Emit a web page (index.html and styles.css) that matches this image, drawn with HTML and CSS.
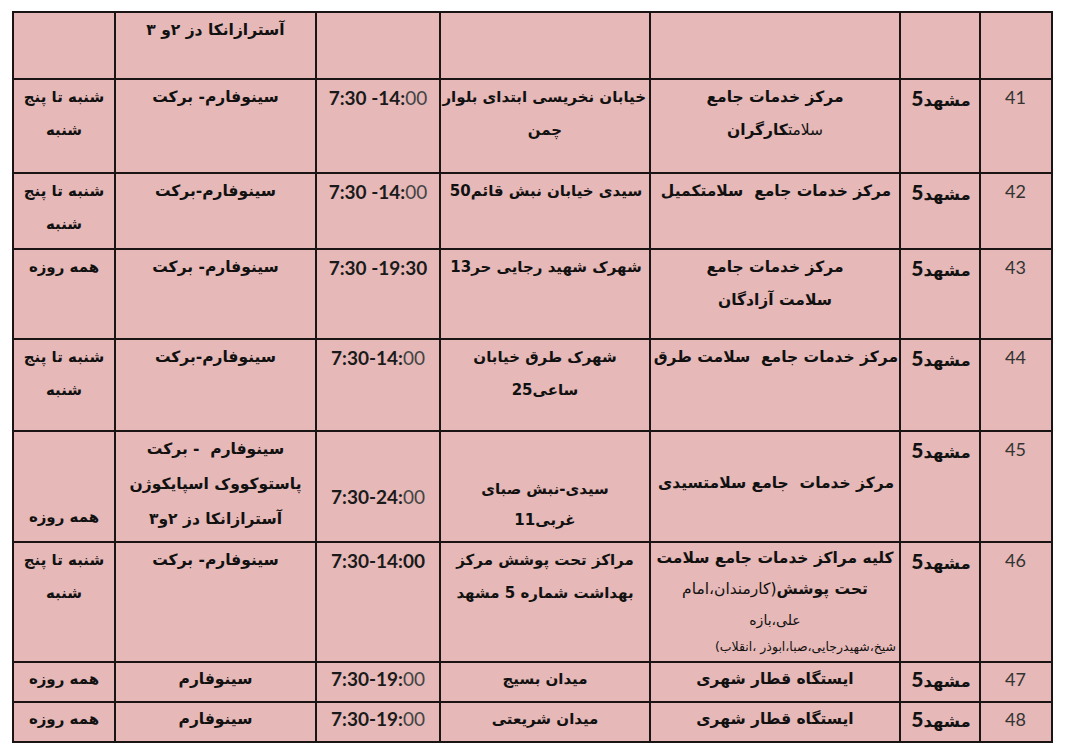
FILE: index.html
```html
<!DOCTYPE html>
<html lang="fa">
<head>
<meta charset="utf-8">
<link rel="stylesheet" href="styles.css">
</head>
<body>
<table class="sheet" dir="rtl">
  <colgroup>
    <col class="c-num"><col class="c-city"><col class="c-name"><col class="c-addr"><col class="c-time"><col class="c-vac"><col class="c-day">
  </colgroup>
  <tr class="r0 thin-b">
    <td></td><td></td><td></td><td></td><td></td>
    <td class="vac">آسترازانکا دز ۲و ۳</td>
    <td></td>
  </tr>
  <tr class="r41">
    <td class="num">41</td>
    <td class="city">مشهد<b>5</b></td>
    <td class="name">مرکز خدمات جامع<br><span class="reg">سلامت</span>کارگران</td>
    <td class="addr">خیابان نخریسی ابتدای بلوار<br>چمن</td>
    <td class="time"><span dir="ltr">7:30 -14:<i>00</i></span></td>
    <td class="vac">سینوفارم- برکت</td>
    <td class="day">شنبه تا پنج<br>شنبه</td>
  </tr>
  <tr class="r42 thin-b">
    <td class="num">42</td>
    <td class="city">مشهد<b>5</b></td>
    <td class="name wide">مرکز خدمات جامع&nbsp; سلامت<b>کمیل</b></td>
    <td class="addr wide">سیدی خیابان نبش قائم50</td>
    <td class="time"><span dir="ltr">7:30 -14:<i>00</i></span></td>
    <td class="vac">سینوفارم-برکت</td>
    <td class="day">شنبه تا پنج<br>شنبه</td>
  </tr>
  <tr class="r43 thin-b">
    <td class="num">43</td>
    <td class="city">مشهد<b>5</b></td>
    <td class="name">مرکز خدمات جامع<br>سلامت آزادگان</td>
    <td class="addr wide">شهرک شهید رجایی حر13</td>
    <td class="time"><span dir="ltr">7:30 -19:30</span></td>
    <td class="vac">سینوفارم- برکت</td>
    <td class="day">همه روزه</td>
  </tr>
  <tr class="r44">
    <td class="num">44</td>
    <td class="city">مشهد<b>5</b></td>
    <td class="name wide">مرکز خدمات جامع&nbsp; سلامت طرق</td>
    <td class="addr">شهرک طرق خیابان<br>ساعی25</td>
    <td class="time"><span dir="ltr">7:30-14:<i>00</i></span></td>
    <td class="vac">سینوفارم-برکت</td>
    <td class="day">شنبه تا پنج<br>شنبه</td>
  </tr>
  <tr class="r45">
    <td class="num">45</td>
    <td class="city">مشهد<b>5</b></td>
    <td class="name wide drop-name">مرکز خدمات&nbsp; جامع سلامت<b>سیدی</b></td>
    <td class="addr drop-addr">سیدی-نبش صبای<br>غربی11</td>
    <td class="time drop-time"><span dir="ltr">7:30-24:<i>00</i></span></td>
    <td class="vac tall">سینوفارم&nbsp; - برکت<br>پاستوکووک اسپایکوژن<br>آسترازانکا دز ۲و۳</td>
    <td class="day bottom">همه روزه</td>
  </tr>
  <tr class="r46 thin-b">
    <td class="num">46</td>
    <td class="city">مشهد<b>5</b></td>
    <td class="name list">
      <div class="l1">کلیه مراکز خدمات جامع سلامت</div>
      <div class="l2">تحت پوشش<span class="reg">(کارمندان،امام</span></div>
      <div class="l3 reg">علی،بازه</div>
      <div class="l4 reg">شیخ،شهیدرجایی،صبا،ابوذر ،انقلاب)</div>
    </td>
    <td class="addr">مراکز تحت پوشش مرکز<br>بهداشت شماره 5 مشهد</td>
    <td class="time"><span dir="ltr">7:30-14:00</span></td>
    <td class="vac">سینوفارم- برکت</td>
    <td class="day">شنبه تا پنج<br>شنبه</td>
  </tr>
  <tr class="r47 thin-b">
    <td class="num">47</td>
    <td class="city">مشهد<b>5</b></td>
    <td class="name">ایستگاه قطار شهری</td>
    <td class="addr">میدان بسیج</td>
    <td class="time"><span dir="ltr">7:30-19:<i>00</i></span></td>
    <td class="vac">سینوفارم</td>
    <td class="day">همه روزه</td>
  </tr>
  <tr class="r48">
    <td class="num">48</td>
    <td class="city">مشهد<b>5</b></td>
    <td class="name">ایستگاه قطار شهری</td>
    <td class="addr">میدان شریعتی</td>
    <td class="time"><span dir="ltr">7:30-19:<i>00</i></span></td>
    <td class="vac">سینوفارم</td>
    <td class="day">همه روزه</td>
  </tr>
</table>
</body>
</html>
```

FILE: styles.css
```css
html, body {
  margin: 0;
  padding: 0;
  background: #ffffff;
}
body {
  padding: 11px 0 0 12px;
}
.sheet {
  border-collapse: collapse;
  table-layout: fixed;
  width: 1041px;
  background: #e6b8b7;
  font-family: "DejaVu Sans", sans-serif;
  font-weight: bold;
  font-size: 15.5px;
  line-height: 33px;
  color: #111;
}
.c-num { width: 72px; }
.c-city { width: 80px; }
.c-name { width: 250px; }
.c-addr { width: 210px; }
.c-time { width: 124px; }
.c-vac { width: 201px; }
.c-day { width: 102px; }

.sheet td {
  border: 2px solid #1a1414;
  vertical-align: top;
  text-align: center;
  padding: 1px 3px 0;
  white-space: nowrap;
  overflow: visible;
}
.thin-b td { border-bottom-width: 1px; border-bottom-color: #3a3030; }

.r0 { height: 67px; }
.r41 { height: 94px; }
.r42 { height: 76px; }
.r43 { height: 90px; }
.r44 { height: 92px; }
.r45 { height: 111px; }
.r46 { height: 120px; }
.r47 { height: 40px; }
.r48 { height: 40px; }
.r47 td, .r48 td { padding-top: 0; line-height: 32px; }

.num {
  font-family: "Lato", "Liberation Sans", sans-serif;
  font-weight: normal;
  font-size: 18px;
  color: #333;
  text-align: right;
  padding-right: 4px !important;
}
.city {
  text-align: right;
  padding-right: 1px !important;
  font-size: 16.5px;
}
.city b {
  font-family: "Lato", "Liberation Sans", sans-serif;
  font-size: 21px;
  font-weight: 900;
}
.addr { font-size: 15px; }
.wide { text-align: right; padding-right: 1px !important; }
.reg { font-weight: normal; }

.name.list { line-height: normal; padding-top: 0; }
.list .l1 { line-height: 31px; }
.list .l2 { line-height: 31px; }
.list .l3 { line-height: 30px; font-size: 14px; }
.list .l4 { line-height: 24px; font-size: 12.5px; letter-spacing: -0.4px; text-align: right; }

.time {
  font-family: "Lato", "Liberation Sans", sans-serif;
  font-weight: bold;
  font-size: 19px;
  color: #1a1a1a;
}
.time i {
  font-style: normal;
  font-weight: normal;
  color: #444;
}
.drop-name { padding-top: 35px !important; }
.drop-addr { padding-top: 42px !important; line-height: 31px; }
.drop-time { padding-top: 48px !important; }
.bottom { vertical-align: bottom !important; padding-bottom: 7px !important; }
.tall { line-height: 35px; padding-top: 0 !important; }
.day { font-size: 15px; }
```
